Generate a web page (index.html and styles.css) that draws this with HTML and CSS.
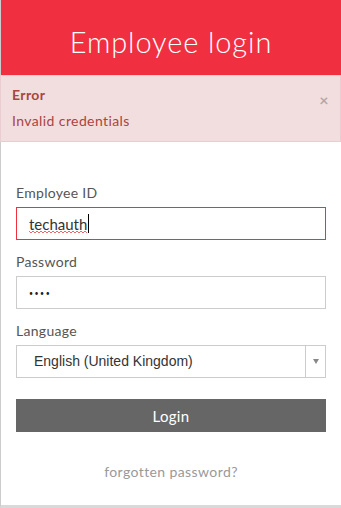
FILE: index.html
```html
<!DOCTYPE html>
<html lang="en">

<head>
    <meta charset="UTF-8">
    <meta name="viewport" content="width=device-width, initial-scale=1.0">
    <title>Employee login</title>
    <link rel="stylesheet" href="styles.css">
</head>

<body>
    <div id="LoginCard">
        <div id="Header">
            <h1>Employee login</h1>
        </div>

        <div class="alert">
            <span class="alert-close">&times;</span>
            <p class="alert-title">Error</p>
            <p class="alert-text">Invalid credentials</p>
        </div>

        <form id="loginForm">
            <div class="field">
                <label for="employeeId">Employee ID</label>
                <div class="input-wrap">
                    <input type="text" id="employeeId" class="input input-error" value="techauth">
                    <!-- spellcheck squiggle + caret -->
                    <svg class="squiggle" width="58" height="4" viewBox="0 0 58 4">
                        <path d="M0 1 L2 3 L4 1 L6 3 L8 1 L10 3 L12 1 L14 3 L16 1 L18 3 L20 1 L22 3 L24 1 L26 3 L28 1 L30 3 L32 1 L34 3 L36 1 L38 3 L40 1 L42 3 L44 1 L46 3 L48 1 L50 3 L52 1 L54 3 L56 1 L58 3" fill="none" stroke="#e8404a" stroke-width="0.8" />
                    </svg>
                    <span class="caret"></span>
                </div>
            </div>
            <div class="field">
                <label for="password">Password</label>
                <input type="password" id="password" class="input input-password" value="abcd">
            </div>
            <div class="field">
                <label for="language">Language</label>
                <div class="select">
                    <span class="select-value">English (United Kingdom)</span>
                    <span class="select-arrow"></span>
                </div>
            </div>
            <button type="submit" id="loginButton">Login</button>
            <p class="forgot"><a href="#">forgotten password?</a></p>
        </form>
    </div>
</body>

</html>
```

FILE: styles.css
```css
body {
    margin: 0;
    font-family: Lato, "Open Sans", sans-serif;
    background-color: #ffffff;
}

#LoginCard {
    width: 340px;
    height: 505px;
    border-left: 1px solid #cccccc;
    border-bottom: 3px solid #d9d9d9;
    background-color: #ffffff;
}

#Header {
    height: 75px;
    background-color: #f02f41;
    display: flex;
    align-items: center;
    justify-content: center;
}

#Header h1 {
    margin: 8px 0 0;
    color: #ffffff;
    font-size: 29px;
    font-weight: 300;
    letter-spacing: 0.9px;
}

/* error box */
.alert {
    position: relative;
    height: 65px;
    padding: 0 11px;
    margin-left: -1px;
    background-color: #f2dede;
    border: 1px solid #ebccd1;
    color: #a94442;
    font-size: 14px;
    letter-spacing: 0.4px;
}

.alert p {
    margin: 0;
    line-height: 20px;
}

.alert-title {
    font-weight: bold;
    padding-top: 9px;
    margin-bottom: 6px !important;
}

.alert-close {
    position: absolute;
    right: 11px;
    top: 16px;
    font-size: 16px;
    font-weight: bold;
    line-height: 16px;
    color: #000000;
    opacity: 0.25;
}

form {
    padding: 41px 15px 0;
}

.field {
    margin-bottom: 12px;
}

label {
    display: block;
    font-size: 14px;
    line-height: 20px;
    margin-bottom: 4px;
    color: #555555;
    letter-spacing: 0.3px;
}

.input-wrap {
    position: relative;
}

.input {
    display: block;
    width: 100%;
    height: 33px;
    padding: 0 12px;
    margin: 0;
    border: 1px solid #cccccc;
    border-radius: 0;
    box-sizing: border-box;
    font-family: Lato, "Open Sans", sans-serif;
    font-size: 15px;
    color: #333333;
    outline: none;
}

.input-error {
    border-color: #f02f41;
}

.squiggle {
    position: absolute;
    left: 13px;
    top: 23px;
}

.caret {
    position: absolute;
    left: 72px;
    top: 7px;
    width: 1px;
    height: 19px;
    background-color: #000000;
}

.input-password {
    font-size: 7px;
    letter-spacing: 1.5px;
    color: #222222;
}

.select {
    display: flex;
    height: 33px;
    border: 1px solid #cccccc;
    box-sizing: border-box;
    font-family: "Liberation Sans", Arial, sans-serif;
    font-size: 14px;
    color: #333333;
}

.select-value {
    flex: 1;
    padding-left: 17px;
    line-height: 31px;
}

.select-arrow {
    width: 19px;
    border-left: 1px solid #cccccc;
    display: flex;
    align-items: center;
    justify-content: center;
}

.select-arrow::after {
    content: "";
    border-left: 3px solid transparent;
    border-right: 3px solid transparent;
    border-top: 5px solid #888888;
}

#loginButton {
    display: block;
    width: 100%;
    height: 33px;
    margin-top: 21px;
    border: none;
    background-color: #666666;
    color: #ffffff;
    font-family: Lato, "Open Sans", sans-serif;
    font-size: 15px;
    letter-spacing: 0.3px;
}

.forgot {
    margin: 30px 0 0;
    text-align: center;
    font-size: 14px;
    line-height: 20px;
    letter-spacing: 0.4px;
}

.forgot a {
    color: #999999;
    text-decoration: none;
}
```
